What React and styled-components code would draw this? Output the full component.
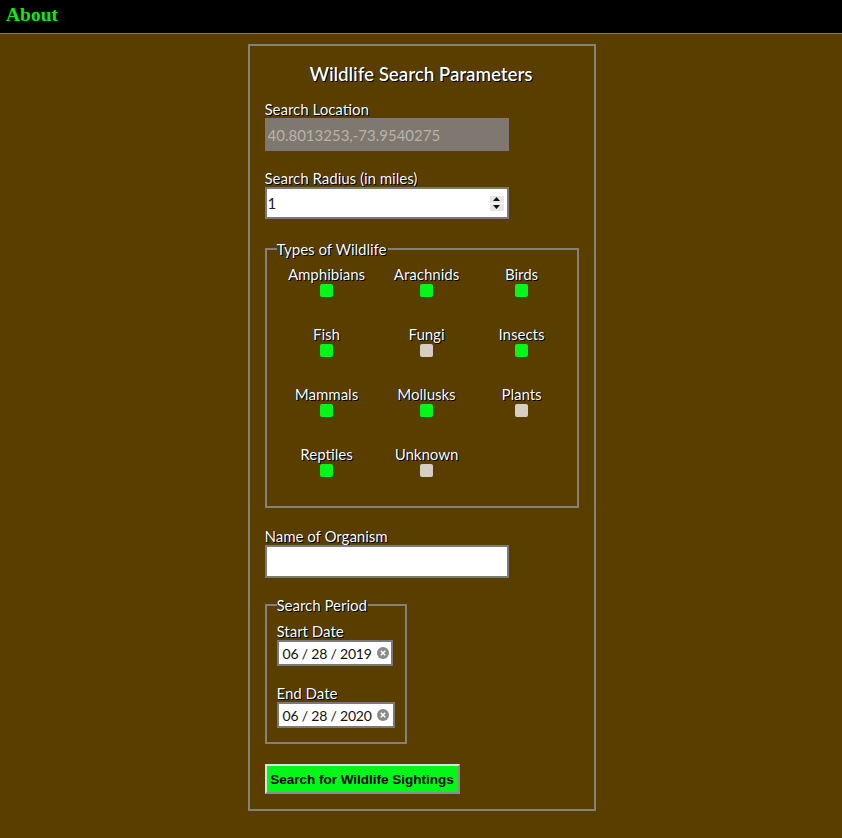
import React from "react";
import styled, { createGlobalStyle } from "styled-components";

const Global = createGlobalStyle`
  html, body { margin: 0; padding: 0; background: #5a3e00; }
  body { font-family: Lato, "Open Sans", sans-serif; }
`;

const Header = styled.header`
  height: 33px;
  background: #000;
  border-bottom: 1px solid #8a7a5a;
  display: flex;
  align-items: center;
  padding-left: 6px;
`;

const Brand = styled.a`
  font-family: "Liberation Serif", serif;
  font-weight: bold;
  font-size: 19.5px;
  color: #14e614;
  text-decoration: none;
  margin-top: -3px;
`;

const Main = styled.main`
  display: flex;
  justify-content: center;
  padding: 10px 0 0 1px;
`;

const Panel = styled.form`
  width: 313px;
  border: 2px solid #858178;
  padding: 17px 16px 15px 15px;
  display: flex;
  flex-direction: column;
  align-items: flex-start;
  color: #fff;
  text-shadow: 1px 1px 0 #000, -0.5px -0.5px 0 #000;
`;

const Title = styled.h1`
  align-self: stretch;
  text-align: center;
  font-size: 18.7px;
  font-weight: 600;
  line-height: 22px;
  margin: 0 0 15px 0;
`;

const Label = styled.label`
  display: block;
  font-size: 15px;
  line-height: 18px;
`;

const Field = styled.div`
  display: flex;
  flex-direction: column;
  align-items: flex-start;
  margin-bottom: ${(p) => p.$mb || 18}px;
`;

const TextBox = styled.input`
  box-sizing: border-box;
  width: 244px;
  height: ${(p) => p.$h || 33}px;
  border: 2px solid ${(p) => (p.disabled ? "#7f7870" : "#7a7a7a")};
  background: ${(p) => (p.disabled ? "#7f7870" : "#fff")};
  color: ${(p) => (p.disabled ? "#b9b3aa" : "#222")};
  font-family: Lato, sans-serif;
  font-size: 15px;
  padding: 0 1px;
  outline: none;
  text-shadow: none;
`;

const NumberWrap = styled.div`
  box-sizing: border-box;
  width: 244px;
  height: 32px;
  border: 2px solid #7a7a7a;
  background: #fff;
  display: flex;
  align-items: center;
  padding: 0 2px 0 0;
`;

const NumberInput = styled.input`
  flex: 1;
  min-width: 0;
  border: none;
  outline: none;
  background: transparent;
  font-family: Lato, sans-serif;
  font-size: 15px;
  color: #222;
  padding: 0 0 0 1px;
  text-shadow: none;
`;

const Spinner = styled.div`
  display: flex;
  flex-direction: column;
  gap: 1px;
  margin-right: 1px;
`;

const SpinBtn = styled.div`
  width: 14px;
  height: 7px;
  background: #e6e6e6;
  display: flex;
  align-items: center;
  justify-content: center;
`;

const Fieldset = styled.fieldset`
  margin: 0 0 ${(p) => p.$mb || 0}px 0;
  border: 2px solid #858178;
  padding: ${(p) => p.$pad};
  min-width: 0;
  box-sizing: border-box;
  width: ${(p) => p.$w}px;
`;

const Legend = styled.legend`
  font-size: 15px;
  line-height: 18px;
  padding: 0 1px 0 0;
  margin-left: ${(p) => p.$ml || 0}px;
`;

const Grid = styled.div`
  display: grid;
  grid-template-columns: 120px 80px 110px;
  row-gap: 28px;
`;

const Option = styled.label`
  display: flex;
  flex-direction: column;
  align-items: center;
  font-size: 15px;
  line-height: 18px;
  gap: 1px;
`;

const Box = styled.span`
  width: 13px;
  height: 13px;
  border-radius: 2px;
  background: ${(p) => (p.$on ? "#05f71a" : "#d5cfc3")};
`;

const DateBox = styled.div`
  box-sizing: border-box;
  width: ${(p) => p.$w}px;
  height: 26px;
  border: 2px solid #7a7a7a;
  background: #fff;
  display: flex;
  align-items: center;
  padding-left: 4px;
  gap: 5px;
  color: #111;
  font-size: 14px;
  letter-spacing: -0.2px;
  white-space: nowrap;
  text-shadow: none;
`;

const SubField = styled.div`
  display: flex;
  flex-direction: column;
  align-items: flex-start;
  margin-bottom: ${(p) => p.$mb || 0}px;
`;

const Button = styled.button`
  margin-top: 20px;
  width: 195px;
  height: 30px;
  background: #05f71a;
  border: 2px solid;
  border-color: #e0e0e0 #8c8c8c #8c8c8c #e0e0e0;
  font-family: "Liberation Sans", Arial, sans-serif;
  font-weight: bold;
  font-size: 13.5px;
  color: #000;
  padding: 0;
  text-shadow: none;
`;

const types = [
  ["Amphibians", true],
  ["Arachnids", true],
  ["Birds", true],
  ["Fish", true],
  ["Fungi", false],
  ["Insects", true],
  ["Mammals", true],
  ["Mollusks", true],
  ["Plants", false],
  ["Reptiles", true],
  ["Unknown", false],
];

const ClearIcon = () => (
  <svg width="12" height="12" viewBox="0 0 12 12" style={{ flexShrink: 0 }}>
    <circle cx="6" cy="6" r="6" fill="#8a8a8a" />
    <path d="M3.8 3.8 L8.2 8.2 M8.2 3.8 L3.8 8.2" stroke="#fff" strokeWidth="1.6" />
  </svg>
);

const Tri = ({ up }) => (
  <svg width="7" height="4" viewBox="0 0 7 4">
    <path d={up ? "M0 4 L3.5 0 L7 4 Z" : "M0 0 L7 0 L3.5 4 Z"} fill="#111" />
  </svg>
);

export default function App() {
  return (
    <>
      <Global />
      <Header>
        <Brand href="#">About</Brand>
      </Header>
      <Main>
        <Panel onSubmit={(e) => e.preventDefault()}>
          <Title>Wildlife Search Parameters</Title>
          <Field>
            <Label>Search Location</Label>
            <TextBox disabled defaultValue="40.8013253,-73.9540275" />
          </Field>
          <Field $mb={21}>
            <Label>Search Radius (in miles)</Label>
            <NumberWrap>
              <NumberInput defaultValue="1" />
              <Spinner>
                <SpinBtn><Tri up /></SpinBtn>
                <SpinBtn><Tri /></SpinBtn>
              </Spinner>
            </NumberWrap>
          </Field>
          <Fieldset $w={314} $pad="7px 0 29px 0" $mb={19}>
            <Legend $ml={10}>Types of Wildlife</Legend>
            <Grid>
              {types.map(([name, on]) => (
                <Option key={name}>
                  {name}
                  <Box $on={on} />
                </Option>
              ))}
            </Grid>
          </Fieldset>
          <Field $mb={18}>
            <Label>Name of Organism</Label>
            <TextBox />
          </Field>
          <Fieldset $w={142} $pad="8px 10px 14px 10px">
            <Legend>Search Period</Legend>
            <SubField $mb={18}>
              <Label>Start Date</Label>
              <DateBox $w={116}>
                06 / 28 / 2019
                <ClearIcon />
              </DateBox>
            </SubField>
            <SubField>
              <Label>End Date</Label>
              <DateBox $w={118}>
                06 / 28 / 2020
                <ClearIcon />
              </DateBox>
            </SubField>
          </Fieldset>
          <Button type="submit">Search for Wildlife Sightings</Button>
        </Panel>
      </Main>
    </>
  );
}
